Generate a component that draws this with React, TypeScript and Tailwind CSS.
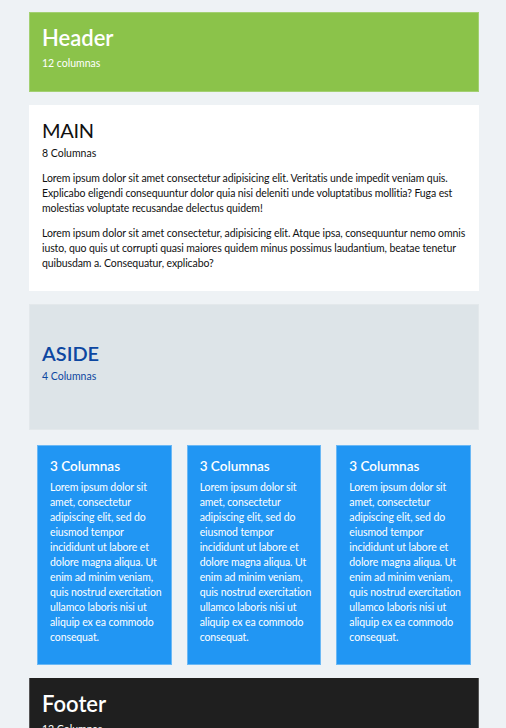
import React from "react";

const cardLines = [
  "Lorem ipsum dolor sit",
  "amet, consectetur",
  "adipiscing elit, sed do",
  "eiusmod tempor",
  "incididunt ut labore et",
  "dolore magna aliqua. Ut",
  "enim ad minim veniam,",
  "quis nostrud exercitation",
  "ullamco laboris nisi ut",
  "aliquip ex ea commodo",
  "consequat.",
];

const para1 = [
  "Lorem ipsum dolor sit amet consectetur adipisicing elit. Veritatis unde impedit veniam quis.",
  "Explicabo eligendi consequuntur dolor quia nisi deleniti unde voluptatibus mollitia? Fuga est",
  "molestias voluptate recusandae delectus quidem!",
];

const para2 = [
  "Lorem ipsum dolor sit amet consectetur, adipisicing elit. Atque ipsa, consequuntur nemo omnis",
  "iusto, quo quis ut corrupti quasi maiores quidem minus possimus laudantium, beatae tenetur",
  "quibusdam a. Consequatur, explicabo?",
];

function Lines({ lines }: { lines: string[] }) {
  return (
    <>
      {lines.map((l, i) => (
        <span key={i} className="block whitespace-nowrap">
          {l}
        </span>
      ))}
    </>
  );
}

export default function App() {
  return (
    <div
      className="min-h-[728px] bg-[#eef2f5] pt-[12px] pb-[40px]"
      style={{ fontFamily: 'Lato, "Open Sans", sans-serif' }}
    >
      <div className="ml-[29px] flex w-[450px] flex-col">
        <header className="h-[80px] border border-[#a3d072] bg-[#8bc34a] px-[12px] pt-[10px] text-white">
          <h1 className="text-[22px] font-semibold leading-[30px]">Header</h1>
          <p className="mt-[3px] text-[10.5px] leading-[14px]">12 columnas</p>
        </header>

        <main className="mt-[13px] h-[186px] bg-white px-[13px] pt-[11px] text-[#111]">
          <h2 className="text-[20px] font-normal leading-[28px] tracking-[-0.3px]">MAIN</h2>
          <p className="mt-[2px] text-[10.5px] leading-[14px]">8 Columnas</p>
          <p className="mt-[11px] text-[10.5px] leading-[15px] tracking-[-0.1px]">
            <Lines lines={para1} />
          </p>
          <p className="mt-[10px] text-[10.5px] leading-[15px] tracking-[-0.1px]">
            <Lines lines={para2} />
          </p>
        </main>

        <aside className="mt-[13px] h-[126px] border border-[#e3e8eb] bg-[#dde4e8] px-[12px] pt-[34px] text-[#0d47a1]">
          <h2 className="text-[20px] font-semibold leading-[28px]">ASIDE</h2>
          <p className="mt-[2px] text-[10.5px] leading-[14px]">4 Columnas</p>
        </aside>

        <section className="mt-[15px] grid grid-cols-3 gap-[15px] px-[8px]">
          {[0, 1, 2].map((i) => (
            <div
              key={i}
              className="h-[220px] border border-[#6ab8f5] bg-[#2196f3] px-[12px] pt-[11px] text-white"
            >
              <h3 className="text-[13.5px] font-semibold leading-[18px]">3 Columnas</h3>
              <p className="mt-[5px] text-[10.5px] leading-[15px] tracking-[-0.1px]">
                <Lines lines={cardLines} />
              </p>
            </div>
          ))}
        </section>

        <footer className="mt-[13px] h-[90px] border-x border-[#555] bg-[#1f1f1f] px-[12px] pt-[11px] text-white">
          <h2 className="text-[22px] font-semibold leading-[30px]">Footer</h2>
          <p className="mt-[3px] text-[10.5px] leading-[14px]">12 Columnas</p>
        </footer>
      </div>
    </div>
  );
}
